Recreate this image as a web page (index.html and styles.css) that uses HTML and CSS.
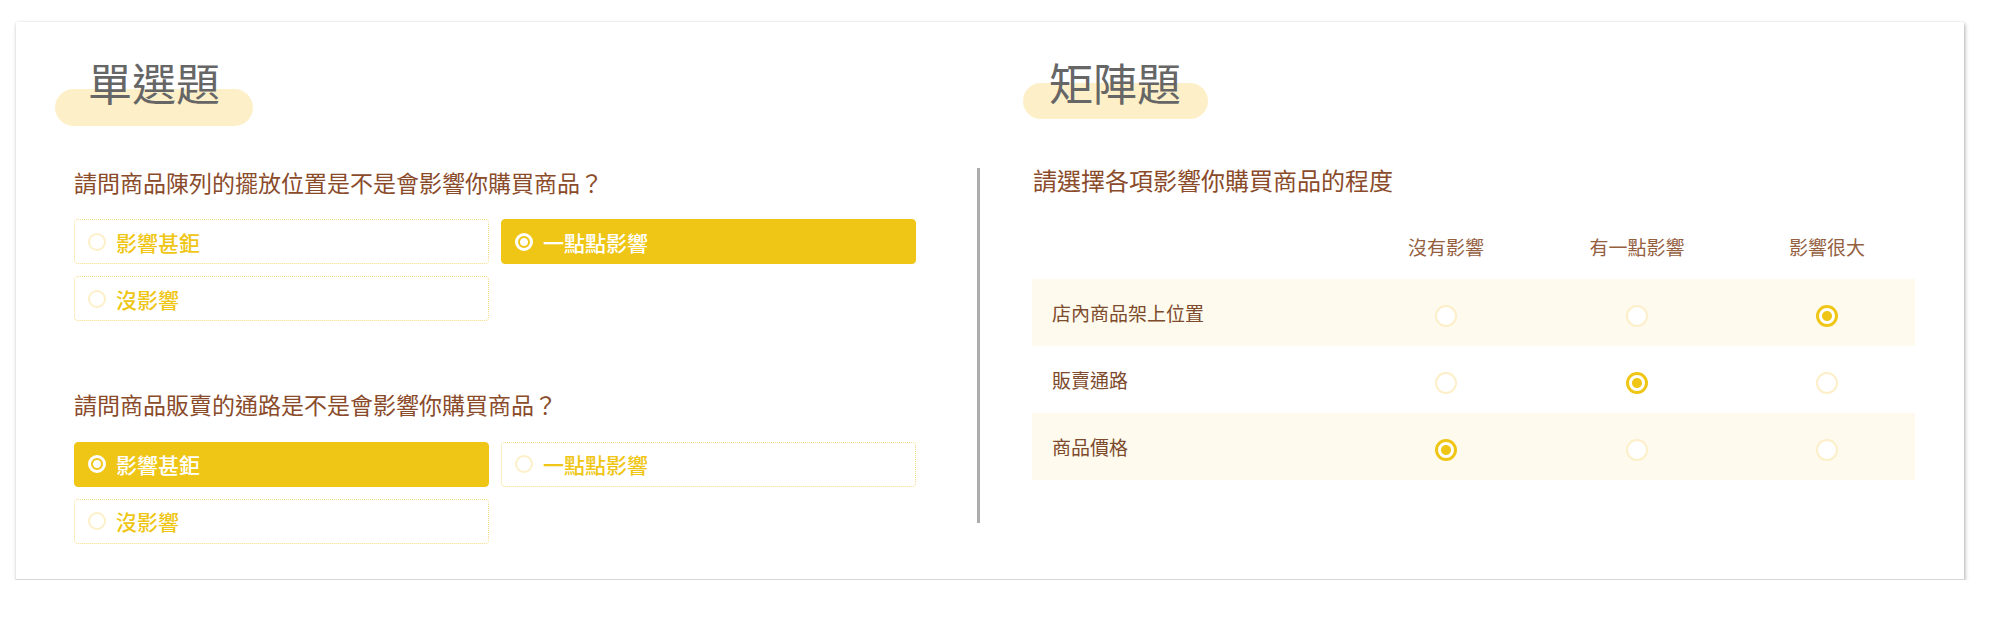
FILE: index.html
```html
<!DOCTYPE html>
<html>
<head>
  <title>問卷題型</title>
  <link rel="stylesheet" href="styles.css">
</head>
<body>
  <div class="card">
    <div class="panel panel-single">
      <h2 class="section-title">單選題</h2>

      <div class="question">
        <p class="question-text">請問商品陳列的擺放位置是不是會影響你購買商品？</p>
        <div class="options">
          <label class="option"><span class="radio"></span>影響甚鉅</label>
          <label class="option selected"><span class="radio"></span>一點點影響</label>
          <label class="option"><span class="radio"></span>沒影響</label>
        </div>
      </div>

      <div class="question">
        <p class="question-text">請問商品販賣的通路是不是會影響你購買商品？</p>
        <div class="options">
          <label class="option selected"><span class="radio"></span>影響甚鉅</label>
          <label class="option"><span class="radio"></span>一點點影響</label>
          <label class="option"><span class="radio"></span>沒影響</label>
        </div>
      </div>
    </div>

    <div class="divider"></div>

    <div class="panel panel-matrix">
      <h2 class="section-title matrix-title">矩陣題</h2>
      <p class="matrix-question">請選擇各項影響你購買商品的程度</p>

      <table class="matrix">
        <colgroup>
          <col class="col-label">
          <col class="col-a">
          <col class="col-b">
          <col class="col-c">
        </colgroup>
        <thead>
          <tr>
            <th></th>
            <th>沒有影響</th>
            <th>有一點影響</th>
            <th>影響很大</th>
          </tr>
        </thead>
        <tbody>
          <tr>
            <td>店內商品架上位置</td>
            <td><span class="dot"></span></td>
            <td><span class="dot"></span></td>
            <td><span class="dot checked"></span></td>
          </tr>
          <tr>
            <td>販賣通路</td>
            <td><span class="dot"></span></td>
            <td><span class="dot checked"></span></td>
            <td><span class="dot"></span></td>
          </tr>
          <tr>
            <td>商品價格</td>
            <td><span class="dot checked"></span></td>
            <td><span class="dot"></span></td>
            <td><span class="dot"></span></td>
          </tr>
        </tbody>
      </table>
    </div>
  </div>
</body>
</html>
```

FILE: styles.css
```css
body {
  margin: 0;
  padding-top: 22px;
  background-color: #fff;
  font-family: 'Noto Sans CJK TC', 'Noto Sans', sans-serif;
}

.card {
  display: flex;
  align-items: flex-start;
  width: 1948px;
  height: 558px;
  box-sizing: border-box;
  margin-left: 16px;
  padding: 34px 0 0 39px;
  background-color: #fff;
  border-bottom: 1px solid #d6d6d6;
  box-shadow: 1px 2px 4px rgba(0,0,0,0.3), 0 0 2px rgba(0,0,0,0.08);
}

.panel-single {
  width: 861px;
}

.panel-matrix {
  width: 892px;
}

.divider {
  width: 3px;
  height: 355px;
  margin: 112px 43px 0 61px;
  background-color: #acacac;
}

/* title with pill highlight */
.section-title {
  position: relative;
  z-index: 0;
  display: inline-block;
  margin: 0;
  padding: 0 33px;
  font-size: 44px;
  font-weight: normal;
  line-height: 1.2;
  color: #666;
}

.section-title::before {
  content: '';
  position: absolute;
  z-index: -1;
  left: 0;
  right: 0;
  top: 33px;
  height: 37px;
  border-radius: 19px;
  background-color: #fdf0c9;
}

.matrix-title {
  padding: 0 27px 0 26px;
}

.matrix-title::before {
  top: 27px;
  height: 36px;
}

/* single choice */
.question {
  padding-left: 19px;
  margin-top: 56px;
}

.question + .question {
  margin-top: 66px;
}

.question-text {
  margin: 0 0 20px;
  font-size: 23px;
  line-height: 1.5;
  color: #8a4b2b;
}

.options {
  display: grid;
  grid-template-columns: repeat(2, 415px);
  gap: 12px;
}

.option {
  display: flex;
  align-items: center;
  gap: 10px;
  height: 45px;
  box-sizing: border-box;
  padding-left: 13px;
  border: 1px dotted #f6dc84;
  border-radius: 4px;
  font-size: 21px;
  font-weight: 500;
  color: #efc616;
}

.option .radio {
  width: 18px;
  height: 18px;
  box-sizing: border-box;
  border: 2px solid #fdf0c9;
  border-radius: 50%;
}

.option.selected {
  background-color: #efc616;
  border: 1px solid #efc616;
  color: #fff;
}

.option.selected .radio {
  border: 3px solid #fff;
  background: radial-gradient(circle, #fff 0 3.5px, transparent 4.5px);
}

/* matrix */
.matrix-question {
  margin: 53px 0 35px 10px;
  font-size: 24px;
  line-height: 1.5;
  color: #8a4b2b;
}

.matrix {
  margin-left: 9px;
  width: 883px;
  table-layout: fixed;
  border-collapse: collapse;
}

.col-label { width: 325px; }
.col-a { width: 178px; }
.col-b { width: 204px; }
.col-c { width: 176px; }

.matrix th {
  padding: 0 0 18px;
  font-size: 19px;
  font-weight: normal;
  line-height: 1.5;
  color: #94603f;
  text-align: center;
}

.matrix td {
  height: 67px;
  padding: 0;
  font-size: 19px;
  color: #7d4a2c;
  text-align: center;
  vertical-align: middle;
}

.matrix td:first-child {
  padding-left: 20px;
  text-align: left;
}

.matrix tbody tr:nth-child(odd) {
  background-color: #fefaee;
}

.dot {
  display: inline-block;
  vertical-align: middle;
  width: 22px;
  height: 22px;
  box-sizing: border-box;
  border: 2px solid #fdefc9;
  border-radius: 50%;
  background-color: #fff;
}

.dot.checked {
  border: 3px solid #efc616;
  background: radial-gradient(circle, #efc616 0 4.5px, #fff 5.5px);
}
```
